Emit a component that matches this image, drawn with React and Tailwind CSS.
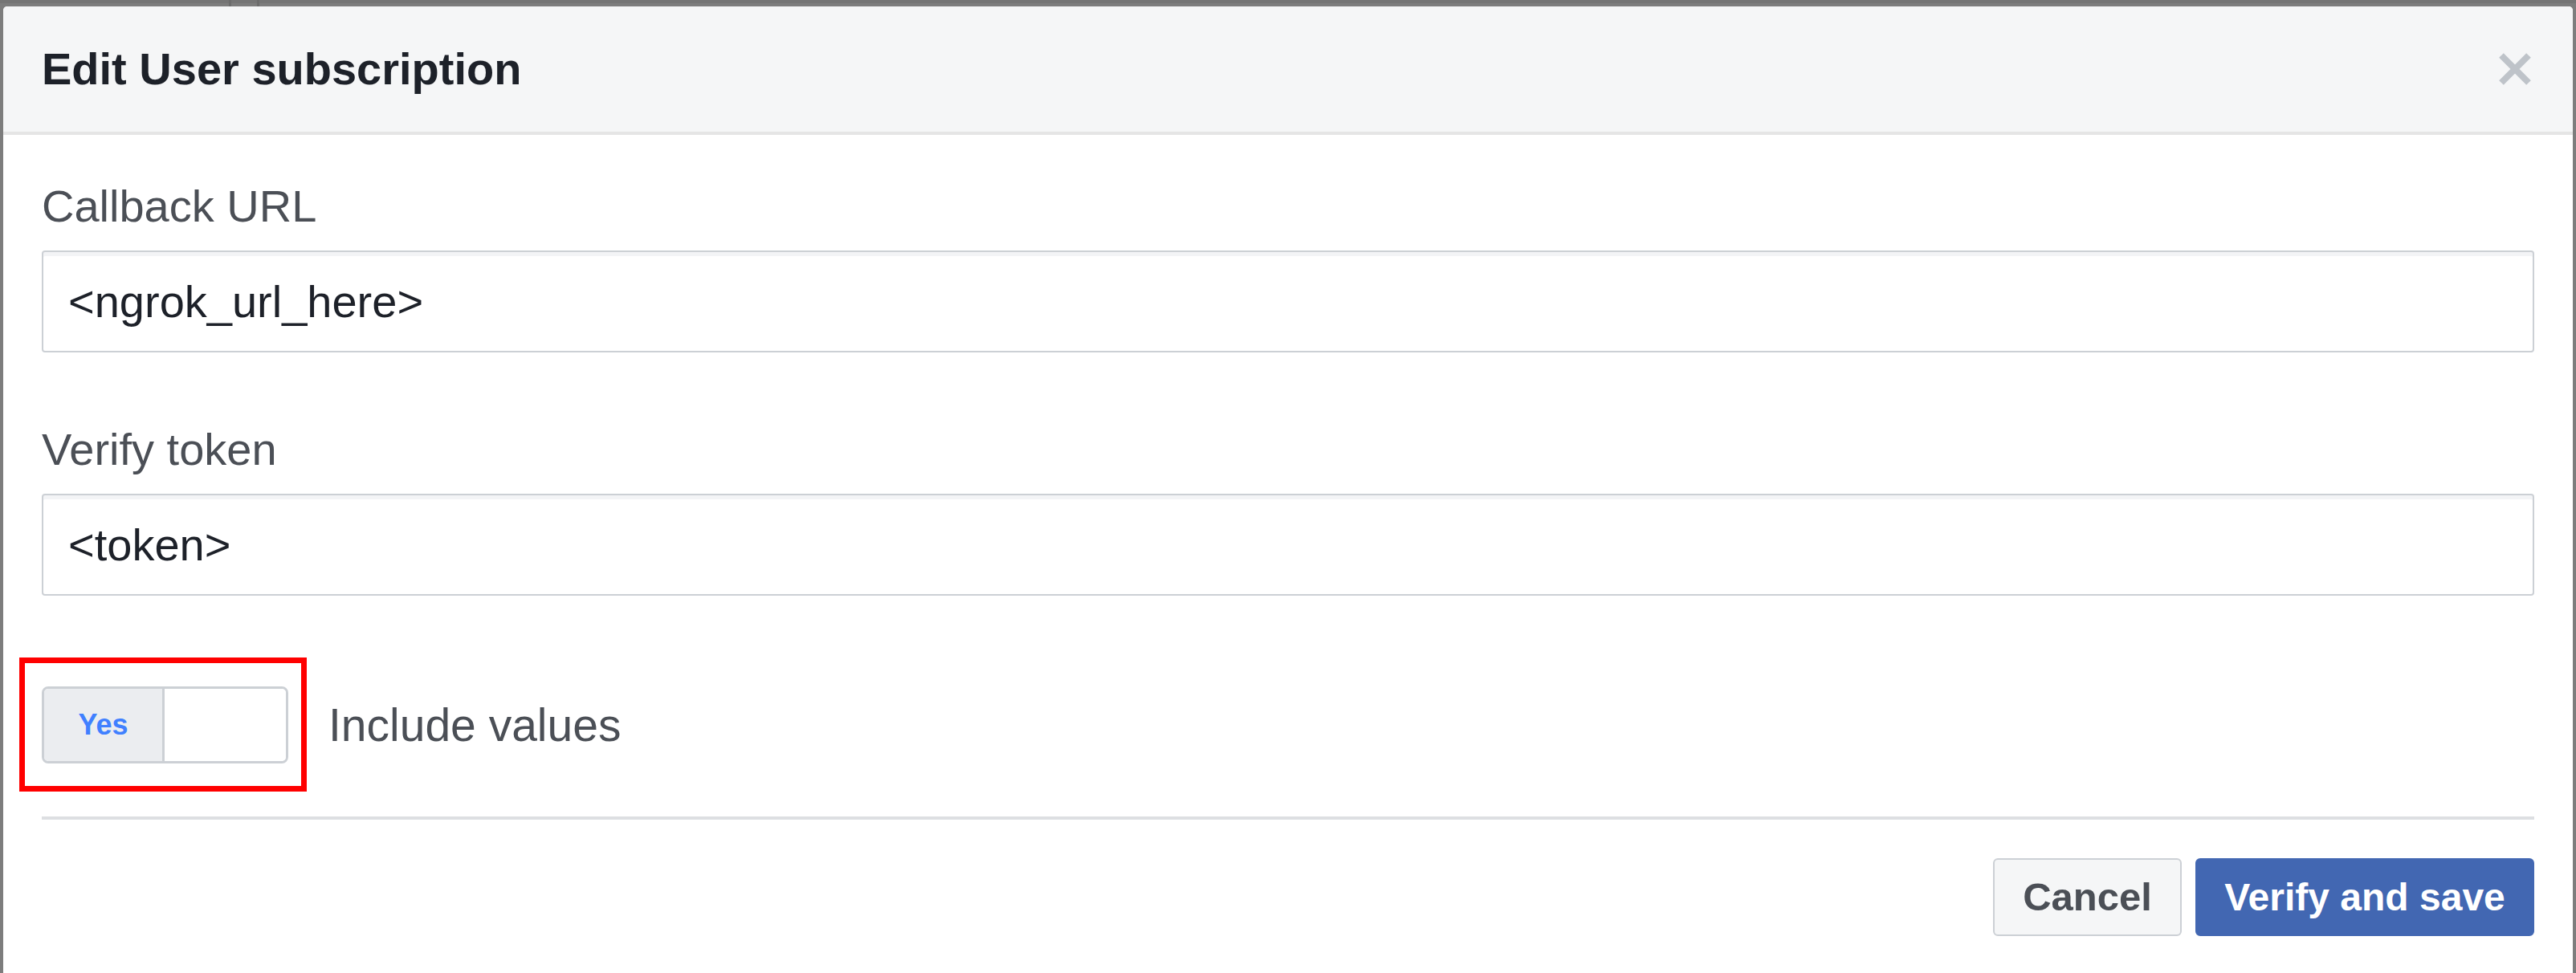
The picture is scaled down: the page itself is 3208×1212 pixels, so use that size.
import React from 'react';

const font = { fontFamily: '"Liberation Sans", Arial, Helvetica, sans-serif' };

const Field = ({ label, value, first }) => (
  <div className={first ? '' : 'mt-[90px]'}>
    <p className="text-[56px] leading-[64px] text-[#4b4f56]">{label}</p>
    <div className="mt-[23px] h-[127px] flex items-center pl-[31px] border-2 border-[#ccd0d5] rounded-[4px] bg-white shadow-[inset_0_5px_0_#f3f4f6]">
      <span className="text-[56px] text-[#1d2129]">{value}</span>
    </div>
  </div>
);

const App = () => {
  return (
    <div className="w-[3208px] h-[1212px] bg-[#7d7d7d] flex flex-col overflow-hidden" style={font}>
      {/* top strip of the page behind the dialog */}
      <div className="h-[8px] flex shrink-0">
        <div className="w-[285px] border-t-4 border-[#757575]" />
        <div className="w-[3px] bg-[#6c6c6c]" />
        <div className="w-[32px] border-t-4 border-[#757575]" />
        <div className="w-[3px] bg-[#6c6c6c]" />
        <div className="flex-1 border-t-4 border-[#757575]" />
      </div>

      <div className="flex-1 mx-[4px] bg-white rounded-t-[5px] flex flex-col overflow-hidden">
        {/* Header */}
        <div className="h-[160px] shrink-0 bg-[#f5f6f7] border-b-4 border-[#e5e5e5] flex items-center justify-between pl-[48px] pr-[52px]">
          <h1 className="text-[56px] font-bold text-[#1d2129] leading-none">Edit User subscription</h1>
          <svg width="40" height="40" viewBox="0 0 40 40">
            <path d="M3 3 L37 37 M37 3 L3 37" stroke="#bec3c9" strokeWidth="8" strokeLinecap="butt" />
          </svg>
        </div>

        {/* Body */}
        <div className="px-[48px] pt-[57px]">
          <Field first label="Callback URL" value="<ngrok_url_here>" />
          <div className="-mt-[1px]">
            <Field label="Verify token" value="<token>" />
          </div>

          {/* Toggle row */}
          <div className="mt-[77px] flex items-center">
            <div className="-ml-[28px] border-[7px] border-[#ff0000] pl-[21px] pr-[16px] pt-[29px] pb-[28px]">
              <div className="w-[307px] h-[96px] flex border-[3px] border-[#ccd0d5] rounded-[8px] overflow-hidden">
                <div className="w-[150px] bg-[#ebedf0] border-r-[3px] border-[#ccd0d5] flex items-center justify-center">
                  <span className="text-[36px] font-bold text-[#4080ff]">Yes</span>
                </div>
                <div className="flex-1 bg-white" />
              </div>
            </div>
            <span className="ml-[27px] text-[57px] leading-[64px] text-[#4b4f56]">Include values</span>
          </div>

          <div className="mt-[31px] h-[4px] bg-[#dddfe2]" />

          {/* Footer buttons */}
          <div className="mt-[48px] flex justify-end gap-[17px]">
            <button className="w-[235px] h-[97px] bg-[#f5f6f7] border-2 border-[#ccd0d5] rounded-[6px] text-[49px] font-bold text-[#4b4f56]">
              Cancel
            </button>
            <button className="w-[422px] h-[97px] bg-[#4267b2] border-2 border-[#4267b2] rounded-[6px] text-[48px] font-bold text-white">
              Verify and save
            </button>
          </div>
        </div>
      </div>
    </div>
  );
};

export default App;
